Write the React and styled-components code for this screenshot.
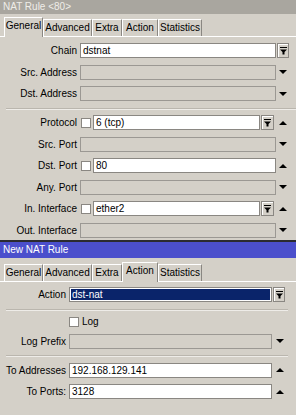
import styled, { createGlobalStyle } from 'styled-components';

const GlobalStyle = createGlobalStyle`
  html, body {
    margin: 0;
    padding: 0;
    background: #d4d0c8;
  }
  body {
    font-family: "Liberation Sans", Arial, sans-serif;
    font-size: 10px;
    color: #000;
  }
  * {
    box-sizing: border-box;
  }
`;

const Screen = styled.div`
  width: 296px;
  height: 415px;
  overflow: hidden;
  display: flex;
  flex-direction: column;
  background: #d4d0c8;
`;

const Window = styled.section`
  display: flex;
  flex-direction: column;
  flex: ${(p) => (p.$fill ? '1 1 auto' : '0 0 auto')};
  height: ${(p) => (p.$height ? `${p.$height}px` : 'auto')};
  border-top: ${(p) => (p.$active ? '2px solid #2b2b30' : '0')};
  overflow: hidden;
`;

const TitleBar = styled.header`
  height: ${(p) => (p.$active ? 16 : 14)}px;
  line-height: ${(p) => (p.$active ? 16 : 14)}px;
  padding-left: 3px;
  background: ${(p) => (p.$active ? '#4b4fcc' : '#a9a69f')};
  color: ${(p) => (p.$active ? '#ffffff' : '#efede8')};
  white-space: nowrap;
`;

const TabStrip = styled.nav`
  display: flex;
  align-items: flex-end;
  height: 19px;
  margin-top: ${(p) => p.$gap}px;
  padding-left: 4px;
`;

const Tab = styled.div`
  position: relative;
  z-index: ${(p) => (p.$active ? 1 : 0)};
  flex: 0 0 auto;
  width: ${(p) => p.$w}px;
  height: ${(p) => (p.$active ? 20 : 17)}px;
  margin-bottom: ${(p) => (p.$active ? -1 : 0)}px;
  border: 1px solid;
  border-bottom: 0;
  border-color: #ffffff #8a8782 transparent #ffffff;
  background: #d4d0c8;
  text-align: center;
  line-height: ${(p) => (p.$active ? 16 : 15)}px;
  white-space: nowrap;
`;

const Panel = styled.div`
  display: flex;
  flex-direction: column;
  gap: 6.5px;
  border-top: 1px solid #ffffff;
  padding: ${(p) => p.$top}px ${(p) => p.$right}px 0 0;
`;

const Row = styled.div`
  flex: 0 0 auto;
  display: grid;
  grid-template-columns: ${(p) => p.$labelW}px 1fr ${(p) => p.$sideW}px;
  align-items: center;
  height: ${(p) => p.$h || 15}px;
`;

const Label = styled.div`
  padding: 0 3px 0 ${(p) => p.$padL || 0}px;
  text-align: right;
  white-space: nowrap;
  overflow: hidden;
`;

const Control = styled.div`
  display: flex;
  align-items: center;
  height: 100%;
  min-width: 0;
`;

const Field = styled.div`
  flex: 1 1 auto;
  min-width: 0;
  height: 15px;
  border: 1px solid ${(p) => (p.$disabled ? '#9b9893' : '#8a8782')};
  background: ${(p) => (p.$disabled ? '#d4d0c8' : p.$selected ? '#0a246a' : '#ffffff')};
  box-shadow: ${(p) => (p.$selected ? 'inset 0 0 0 1px #ffffff' : 'none')};
  color: ${(p) => (p.$selected ? '#ffffff' : '#000000')};
  padding-left: 2px;
  line-height: 13px;
  white-space: nowrap;
  overflow: hidden;
`;

const CheckBox = styled.span`
  flex: 0 0 auto;
  width: 10px;
  height: 10px;
  margin: 0 ${(p) => p.$mr || 0}px 0 ${(p) => p.$ml || 0}px;
  border: 1px solid #8a8782;
  background: #ffffff;
`;

const CheckText = styled.span`
  margin-left: 3px;
  line-height: 11px;
`;

const DropButton = styled.div`
  flex: 0 0 auto;
  width: ${(p) => p.$w}px;
  height: 15px;
  margin: 0 ${(p) => p.$mr || 0}px 0 ${(p) => p.$ml || 0}px;
  border: 1px solid #8a8782;
  box-shadow: inset 1px 1px 0 #ffffff;
  background: #d4d0c8;
  display: flex;
  align-items: center;
  justify-content: center;
`;

const Side = styled.div`
  display: flex;
  align-items: center;
  height: 100%;
`;

const ArrowSvg = styled.svg`
  display: block;
  margin-left: ${(p) => p.$ml}px;
`;

const Separator = styled.div`
  flex: 0 0 auto;
  height: 1px;
  margin-left: 6px;
  background: #bab6ae;
  box-shadow: 0 1px 0 #eeece8;
`;

const ComboIcon = () => (
  <svg width="7" height="8" viewBox="0 0 7 8">
    <rect x="0" y="0" width="7" height="1" fill="#000" />
    <path d="M0 2.5H7L4.5 5V7.5H2.5V5Z" fill="#000" />
  </svg>
);

const Arrow = ({ up, ml }) => (
  <ArrowSvg $ml={ml} width="8" height="4" viewBox="0 0 8 4">
    <polygon points={up ? '4,0 8,4 0,4' : '0,0 8,0 4,4'} fill="#000" />
  </ArrowSvg>
);

const tabs = [
  ['General', 39],
  ['Advanced', 49],
  ['Extra', 30],
  ['Action', 36],
  ['Statistics', 44],
];

const Tabs = ({ active, gap }) => (
  <TabStrip $gap={gap}>
    {tabs.map(([name, w]) => (
      <Tab key={name} $w={w} $active={name === active}>
        {name}
      </Tab>
    ))}
  </TabStrip>
);

// top window: wide label column, arrows at the far right
const T = { $labelW: 80, $sideW: 20 };
// bottom window: narrower labels
const B = { $labelW: 69, $sideW: 16 };

export default function App() {
  return (
    <>
      <GlobalStyle />
      <Screen>
        <Window $height={240}>
          <TitleBar>NAT Rule &lt;80&gt;</TitleBar>
          <Tabs active="General" gap={3} />
          <Panel $top={6} $right={0}>
            <Row {...T}>
              <Label>Chain</Label>
              <Control>
                <Field>dstnat</Field>
              </Control>
              <Side>
                <DropButton $w={12} $ml={1}>
                  <ComboIcon />
                </DropButton>
              </Side>
            </Row>
            <Row {...T}>
              <Label>Src. Address</Label>
              <Control>
                <Field $disabled />
              </Control>
              <Side>
                <Arrow ml={3} />
              </Side>
            </Row>
            <Row {...T}>
              <Label>Dst. Address</Label>
              <Control>
                <Field $disabled />
              </Control>
              <Side>
                <Arrow ml={3} />
              </Side>
            </Row>
            <Separator />
            <Row {...T}>
              <Label>Protocol</Label>
              <Control>
                <CheckBox $ml={1} $mr={2} />
                <Field>6 (tcp)</Field>
                <DropButton $w={13} $ml={1} $mr={2}>
                  <ComboIcon />
                </DropButton>
              </Control>
              <Side>
                <Arrow up ml={3} />
              </Side>
            </Row>
            <Row {...T}>
              <Label>Src. Port</Label>
              <Control>
                <Field $disabled />
              </Control>
              <Side>
                <Arrow ml={3} />
              </Side>
            </Row>
            <Row {...T}>
              <Label>Dst. Port</Label>
              <Control>
                <CheckBox $ml={1} $mr={2} />
                <Field>80</Field>
              </Control>
              <Side>
                <Arrow up ml={3} />
              </Side>
            </Row>
            <Row {...T}>
              <Label>Any. Port</Label>
              <Control>
                <Field $disabled />
              </Control>
              <Side>
                <Arrow ml={3} />
              </Side>
            </Row>
            <Row {...T}>
              <Label>In. Interface</Label>
              <Control>
                <CheckBox $ml={1} $mr={2} />
                <Field>ether2</Field>
                <DropButton $w={13} $ml={1} $mr={2}>
                  <ComboIcon />
                </DropButton>
              </Control>
              <Side>
                <Arrow up ml={3} />
              </Side>
            </Row>
            <Row {...T}>
              <Label>Out. Interface</Label>
              <Control>
                <Field $disabled />
              </Control>
              <Side>
                <Arrow ml={3} />
              </Side>
            </Row>
          </Panel>
        </Window>

        <Window $active $fill>
          <TitleBar $active>New NAT Rule</TitleBar>
          <Tabs active="Action" gap={4} />
          <Panel $top={5} $right={8}>
            <Row {...B}>
              <Label $padL={2}>Action</Label>
              <Control>
                <Field $selected>dst-nat</Field>
              </Control>
              <Side>
                <DropButton $w={12} $ml={1}>
                  <ComboIcon />
                </DropButton>
              </Side>
            </Row>
            <Separator />
            <Row {...B} $h={11}>
              <Label />
              <Control>
                <CheckBox />
                <CheckText>Log</CheckText>
              </Control>
              <Side />
            </Row>
            <Row {...B}>
              <Label $padL={2}>Log Prefix</Label>
              <Control>
                <Field $disabled />
              </Control>
              <Side>
                <Arrow ml={4} />
              </Side>
            </Row>
            <Separator />
            <Row {...B}>
              <Label $padL={2}>To Addresses</Label>
              <Control>
                <Field>192.168.129.141</Field>
              </Control>
              <Side>
                <Arrow up ml={4} />
              </Side>
            </Row>
            <Row {...B}>
              <Label $padL={2}>To Ports:</Label>
              <Control>
                <Field>3128</Field>
              </Control>
              <Side>
                <Arrow up ml={4} />
              </Side>
            </Row>
          </Panel>
        </Window>
      </Screen>
    </>
  );
}
